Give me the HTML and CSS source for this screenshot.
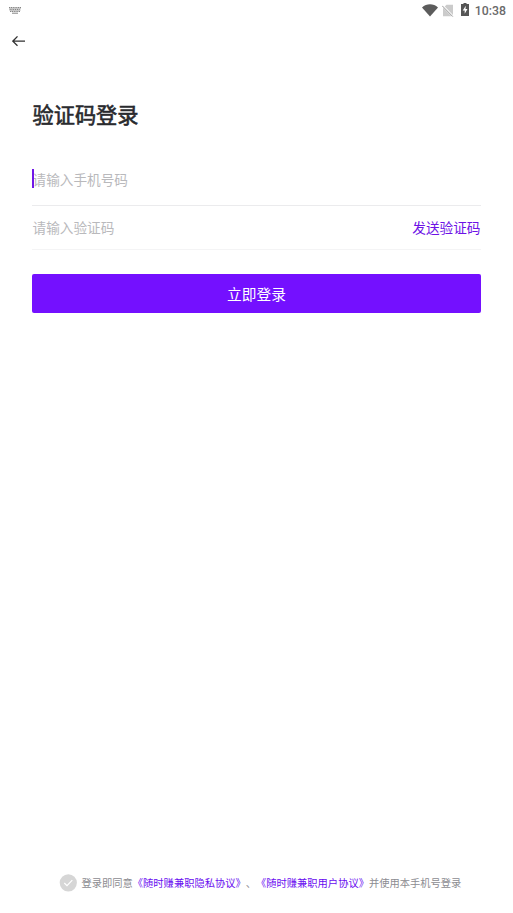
FILE: index.html
```html
<!DOCTYPE html>
<html lang="zh-CN">
<head>
<meta charset="utf-8">
<title>验证码登录</title>
<link rel="stylesheet" href="styles.css">
</head>
<body>
<div class="screen">
  <header class="status">
    <svg class="keyboard" width="12" height="7" viewBox="0 0 12 7">
      <path d="M0 .5h12M.5 2.5h11M1 4.5h10" stroke="#858585" stroke-dasharray="1.3 .5"/>
      <path d="M0 1.5h12M.5 3.5h11" stroke="#c8c8c8"/>
      <path d="M3 6.2h6" stroke="#858585"/>
    </svg>
    <div class="status-right">
      <svg class="wifi" width="16" height="13" viewBox="0 0 16 13"><path d="M0 3.4C4.5-.7 11.5-.7 16 3.4L8 12.6z" fill="#5c5c5c"/></svg>
      <svg class="sim" width="12" height="13" viewBox="0 0 12 13"><path d="M4.5.8H11v11.4H1V4.2z" fill="#cbcbcb"/><path d="M.2 1.2 11.2 12.6" stroke="#fff" stroke-width="2"/><path d="M.2 1.8 10.8 12.6" stroke="#999"/></svg>
      <svg class="battery" width="8" height="13" viewBox="0 0 8 13"><path d="M2.5 0h3v1H8v12H0V1h2.5z" fill="#565656"/><path d="M4.8 2.8 1.7 7.4h2v3.3l2.8-4.6H4.5z" fill="#fff"/></svg>
      <span class="clock">10:38</span>
    </div>
  </header>
  <nav class="nav">
    <svg width="14" height="12" viewBox="0 0 14 12" fill="none" stroke="#303030" stroke-width="1.3"><path d="M13 6.2H.8M5.5 1.4.8 6.2l4.7 4.6"/></svg>
  </nav>
  <main class="form">
    <h1 class="title">验证码登录</h1>
    <div class="field phone"><span class="caret"></span><span>请输入手机号码</span></div>
    <div class="field code"><span>请输入验证码</span><span class="send">发送验证码</span></div>
    <button class="submit">立即登录</button>
  </main>
  <footer class="agreement">
    <svg class="check" width="18" height="18" viewBox="0 0 18 18"><circle cx="9.3" cy="8.8" r="8.6" fill="#d6d6d6"/><path d="m5.3 9 2.7 2.6 5.3-5.4" fill="none" stroke="#fff" stroke-width="1.2"/></svg>
    <p class="terms">登录即同意<span class="link">《随时赚兼职隐私协议》</span>、<span class="link">《随时赚兼职用户协议》</span>并使用本手机号登录</p>
  </footer>
</div>
</body>
</html>
```
FILE: styles.css
```css
* { box-sizing: border-box; }
body {
  margin: 0;
  background: #fff;
  font-family: "Noto Sans CJK SC", sans-serif;
}
.screen {
  display: flex;
  flex-direction: column;
  height: 913px;
  overflow: hidden;
}
.status {
  display: flex;
  justify-content: space-between;
  align-items: flex-start;
  height: 22px;
  padding: 0 7px 0 9px;
}
.keyboard { margin-top: 7px; }
.status-right { display: flex; align-items: flex-start; }
.status-right svg { margin-top: 4px; }
.status-right .battery { margin: 3px 0 0 7px; }
.sim { margin-left: 4px; }
.clock {
  margin-left: 6px;
  font: 500 12.3px/22px Roboto, sans-serif;
  color: #6a6a6a;
}
.nav {
  display: flex;
  align-items: center;
  height: 38px;
  padding-left: 12px;
}
.form {
  display: flex;
  flex-direction: column;
  padding: 38px 32px 0 32px;
}
.title {
  margin: 0 0 0 .5px;
  height: 32px;
  font-size: 21.2px;
  line-height: 32px;
  font-weight: 400;
  color: #292a2e;
  -webkit-text-stroke: .6px #292a2e;
}
.field {
  position: relative;
  display: flex;
  justify-content: space-between;
  align-items: center;
  font-size: 13.65px;
  color: #b9b9bc;
  white-space: nowrap;
}
.phone {
  height: 54px;
  margin-top: 22px;
  padding-left: .5px;
  border-bottom: 1px solid #ebebed;
}
.code {
  height: 44px;
  padding: 0 .5px 2px;
  border-bottom: 1px solid #f4f4f5;
}
.caret {
  position: absolute;
  left: 0;
  top: 17px;
  width: 2px;
  height: 19px;
  background: #7018e8;
}
.send { color: #6d12e6; }
.submit {
  height: 39px;
  margin: 24px 0 0;
  padding: 0;
  border: 0;
  border-radius: 2px;
  background: #7410ff;
  color: #fff;
  font-family: inherit;
  font-size: 14.7px;
}
.agreement {
  display: flex;
  align-items: center;
  height: 22px;
  margin: auto 0 19px 59px;
}
.terms {
  margin: 0 0 0 4.5px;
  font-size: 10.27px;
  line-height: 22px;
  color: #8c8c91;
  white-space: nowrap;
  text-spacing-trim: space-all;
}
.link { color: #6a0cf0; }
```
